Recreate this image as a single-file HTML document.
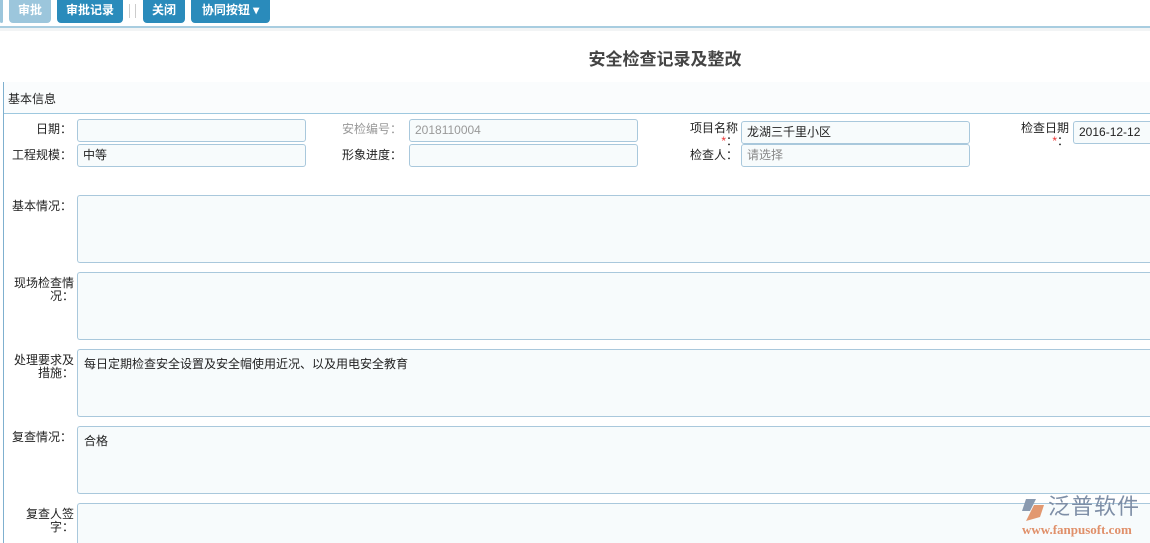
<!DOCTYPE html>
<html><head><meta charset="utf-8"><style>
*{margin:0;padding:0;box-sizing:border-box}
html,body{width:1150px;height:543px;overflow:hidden}
body{background:#fff;font-family:"Liberation Sans","Noto Sans CJK SC",sans-serif;font-size:12px;color:#222;position:relative}
.a{position:absolute}
.btn{position:absolute;top:0;height:23px;background:#2a8bbb;color:#fff;border-radius:0 0 4px 4px;font-size:12px;line-height:21px;text-align:center;font-weight:bold}
.inp{position:absolute;height:23px;border:1px solid #a9c8dc;border-radius:3px;background:#f7fbfc;padding-left:5px;line-height:21px;font-size:12px}
.lbl{position:absolute;text-align:right;font-size:12px;line-height:13px}
.ta{position:absolute;left:77px;width:1073px;height:68px;border:1px solid #a9c8dc;border-right:none;border-radius:3px 0 0 3px;background:#f7fbfc;padding:5px 6px;font-size:12px}
.r{color:#e33}
</style></head><body>
<div class="btn" style="left:0;width:3px;background:#9cc6dc"></div>
<div class="btn" style="left:9px;width:42px;background:#9cc6dc">审批</div>
<div class="btn" style="left:57px;width:66px">审批记录</div>
<div class="a" style="left:129px;top:4px;width:1px;height:14px;background:#ccc"></div>
<div class="a" style="left:135px;top:4px;width:1px;height:14px;background:#ccc"></div>
<div class="btn" style="left:143px;width:42px">关闭</div>
<div class="btn" style="left:191px;width:79px">协同按钮 ▾</div>
<div class="a" style="left:0;top:26px;width:1150px;height:2px;background:#a8cde0"></div>
<div class="a" style="left:0;top:28px;width:1150px;height:3px;background:#f2f4f5"></div>
<div class="a" style="left:0;top:45px;width:1330px;text-align:center;font-size:17px;font-weight:bold;color:#444">安全检查记录及整改</div>
<div class="a" style="left:3px;top:82px;width:1147px;height:32px;background:#fafcfd;border-bottom:1px solid #9ec8df"></div>
<div class="a" style="left:3px;top:82px;width:1px;height:461px;background:#7fb0cf"></div>
<div class="a" style="left:8px;top:90px;font-size:12px">基本信息</div>

<div class="lbl" style="left:0;width:72px;top:123px">日期：</div>
<div class="inp" style="left:77px;top:119px;width:229px"></div>
<div class="lbl" style="left:300px;width:102px;top:123px;color:#999">安检编号：</div>
<div class="inp" style="left:409px;top:119px;width:229px;color:#999">2018110004</div>
<div class="lbl" style="left:640px;width:98px;top:122px">项目名称<br><span class="r">*</span>：</div>
<div class="inp" style="left:741px;top:121px;width:229px">龙湖三千里小区</div>
<div class="lbl" style="left:980px;width:89px;top:122px">检查日期<br><span class="r">*</span>：</div>
<div class="inp" style="left:1073px;top:121px;width:77px;border-right:none;border-radius:3px 0 0 3px">2016-12-12</div>

<div class="lbl" style="left:0;width:72px;top:149px">工程规模：</div>
<div class="inp" style="left:77px;top:144px;width:229px">中等</div>
<div class="lbl" style="left:300px;width:102px;top:149px">形象进度：</div>
<div class="inp" style="left:409px;top:144px;width:229px"></div>
<div class="lbl" style="left:640px;width:98px;top:149px">检查人：</div>
<div class="inp" style="left:741px;top:144px;width:229px;color:#888">请选择</div>

<div class="lbl" style="left:0;width:72px;top:200px">基本情况：</div>
<div class="ta" style="top:195px"></div>
<div class="lbl" style="left:0;width:74px;top:277px">现场检查情<br>况：</div>
<div class="ta" style="top:272px"></div>
<div class="lbl" style="left:0;width:74px;top:354px">处理要求及<br>措施：</div>
<div class="ta" style="top:349px">每日定期检查安全设置及安全帽使用近况、以及用电安全教育</div>
<div class="lbl" style="left:0;width:72px;top:431px">复查情况：</div>
<div class="ta" style="top:426px">合格</div>
<div class="lbl" style="left:0;width:74px;top:508px">复查人签<br>字：</div>
<div class="ta" style="top:503px;height:40px;border-bottom:none;border-radius:3px 0 0 0"></div>

<svg class="a" style="left:1020px;top:497px" width="26" height="26" viewBox="0 0 26 26"><path d="M6 2 L16 2 L10 14 L2 14 Z" fill="#8a9ab0"/><path d="M14 8 L24 8 L20 20 L6 24 Z" fill="#e29870"/></svg>
<div class="a" style="left:1048px;top:494px;font-size:22px;line-height:26px;color:#7e8ea6;letter-spacing:1px">泛普软件</div>
<div class="a" style="left:1022px;top:522px;font-family:'Liberation Serif',serif;font-size:13px;line-height:15px;color:#e0906a;font-weight:bold">www.fanpusoft.com</div>
</body></html>
